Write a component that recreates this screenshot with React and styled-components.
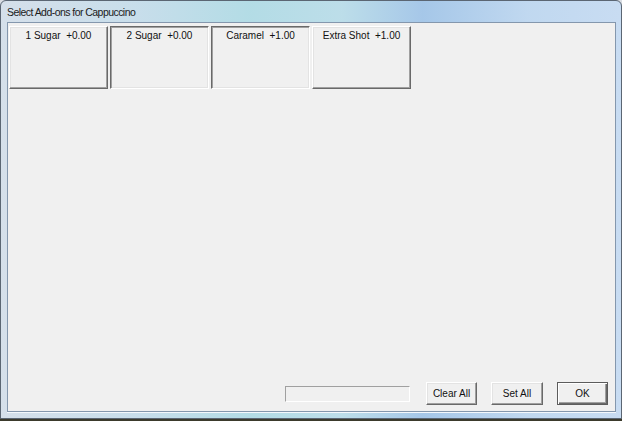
import React from "react";
import styled, { createGlobalStyle, css } from "styled-components";

const Global = createGlobalStyle`
  html, body { margin: 0; padding: 0; }
  body { background: #2f3128; overflow: hidden; }
`;

const Page = styled.div`
  width: 622px;
  height: 421px;
  background: linear-gradient(180deg, #d9dde3 0px, #d9dde3 418px, #3b3a2c 418px, #3b3a2c 421px);
`;

const Window = styled.div`
  box-sizing: border-box;
  width: 622px;
  height: 419px;
  border: 1px solid #5b6673;
  border-radius: 6px 6px 0 0;
  background:
    linear-gradient(90deg, rgba(214,224,234,0.95) 0%, rgba(200,222,234,0.8) 22%, rgba(176,220,228,0.85) 40%, rgba(186,222,232,0.8) 55%, rgba(164,198,232,0.95) 68%, rgba(192,216,240,0.95) 85%, rgba(200,220,242,1) 100%),
    #c6dcee;
  display: flex;
  flex-direction: column;
  padding: 0 5px 6px 6px;
`;

const TitleBar = styled.div`
  height: 21px;
  display: flex;
  align-items: center;
  font-family: "Liberation Sans", Arial, sans-serif;
  font-size: 10.5px;
  letter-spacing: -0.55px;
  color: #1b1b1b;
`;

const Client = styled.div`
  flex: 1;
  background: #f0f0f0;
  border: 1px solid #8497ad;
  box-shadow: 0 1px 0 #f4f8fc;
  display: flex;
  flex-direction: column;
  justify-content: space-between;
`;

const AddonRow = styled.div`
  display: flex;
  gap: 2px;
  padding: 3px 0 0 1px;
`;

const raised = css`
  border-top: 1px solid #ffffff;
  border-left: 1px solid #ffffff;
  border-right: 1px solid #696969;
  border-bottom: 1px solid #696969;
  box-shadow: inset -1px -1px 0 #a0a0a0, inset 1px 1px 0 #e3e3e3;
`;

const sunken = css`
  border-top: 1px solid #696969;
  border-left: 1px solid #696969;
  border-right: 1px solid #ffffff;
  border-bottom: 1px solid #ffffff;
  box-shadow: inset 1px 1px 0 #a0a0a0, inset -1px -1px 0 #e3e3e3;
`;

const AddonButton = styled.div`
  box-sizing: border-box;
  width: 99px;
  height: 63px;
  background: #f0f0f0;
  ${(p) => (p.$selected ? sunken : raised)}
  font-family: "Liberation Sans", Arial, sans-serif;
  font-size: 10px;
  color: #111;
  text-align: center;
  padding-top: 3px;
  white-space: pre;
`;

const Footer = styled.div`
  display: flex;
  align-items: center;
  justify-content: flex-end;
  padding: 0 7px 6px 0;
`;

const StatusBox = styled.div`
  box-sizing: border-box;
  width: 125px;
  height: 16px;
  border-top: 1px solid #a0a0a0;
  border-left: 1px solid #a0a0a0;
  border-right: 1px solid #ffffff;
  border-bottom: 1px solid #ffffff;
  margin-right: 16px;
  margin-top: 1px;
`;

const PushButton = styled.div`
  box-sizing: border-box;
  width: ${(p) => p.$w}px;
  height: 23px;
  margin-left: ${(p) => p.$ml}px;
  background: #f0f0f0;
  display: flex;
  align-items: center;
  justify-content: center;
  font-family: "Liberation Sans", Arial, sans-serif;
  font-size: 10px;
  color: #111;
  ${(p) =>
    p.$default
      ? css`
          border: 1px solid #5c5c5c;
          box-shadow: inset 1px 1px 0 #ffffff, inset -1px -1px 0 #696969, inset -2px -2px 0 #a0a0a0;
        `
      : raised}
`;

const addons = [
  { label: "1 Sugar  +0.00", selected: false },
  { label: "2 Sugar  +0.00", selected: true },
  { label: "Caramel  +1.00", selected: true },
  { label: "Extra Shot  +1.00", selected: false },
];

export default function App() {
  return (
    <Page>
      <Global />
      <Window>
        <TitleBar>Select Add-ons for Cappuccino</TitleBar>
        <Client>
          <AddonRow>
            {addons.map((a) => (
              <AddonButton key={a.label} $selected={a.selected}>
                {a.label}
              </AddonButton>
            ))}
          </AddonRow>
          <Footer>
            <StatusBox />
            <PushButton $w={51} $ml={0}>Clear All</PushButton>
            <PushButton $w={52} $ml={14}>Set All</PushButton>
            <PushButton $w={51} $ml={14} $default>OK</PushButton>
          </Footer>
        </Client>
      </Window>
    </Page>
  );
}
